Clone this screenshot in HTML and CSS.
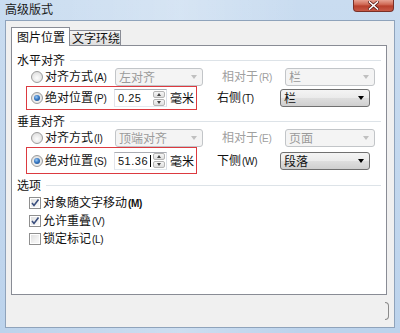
FILE: index.html
```html
<!DOCTYPE html>
<html lang="zh-CN">
<head>
<meta charset="utf-8">
<title>高级版式</title>
<link rel="stylesheet" href="styles.css">
</head>
<body>
<div class="window">
  <div class="titlebar">
    <span class="title">高级版式</span>
    <div class="close">
      <svg width="11" height="9" viewBox="0 0 11 9"><path d="M1.5 1 L9.5 8 M9.5 1 L1.5 8" stroke="#5a1a14" stroke-width="3" stroke-linecap="square"/><path d="M1.5 1 L9.5 8 M9.5 1 L1.5 8" stroke="#ffffff" stroke-width="1.6" stroke-linecap="square"/></svg>
    </div>
  </div>
  <div class="client">
    <div class="tabs">
      <div class="tab active">图片位置</div>
      <div class="tab">文字环绕</div>
    </div>
    <div class="panel">
      <div class="group-head g1"><span>水平对齐</span><i class="rule"></i></div>
      <div class="row">
        <div class="left">
          <span class="radio"></span><span class="label">对齐方式<span class="acc">(A)</span></span>
          <div class="select disabled wl"><span>左对齐</span><i class="arrow"></i></div>
        </div>
        <span class="rlabel dis">相对于<span class="acc">(R)</span></span>
        <div class="select disabled wr"><span>栏</span><i class="arrow"></i></div>
      </div>
      <div class="row boxed b1">
        <div class="left hilite">
          <span class="radio on"></span><span class="label">绝对位置<span class="acc">(P)</span></span>
          <div class="spin"><span class="val">0.25</span><span class="btns"><b class="up"></b><b class="dn"></b></span></div>
          <span class="unit">毫米</span>
        </div>
        <span class="rlabel">右侧<span class="acc">(T)</span></span>
        <div class="select wr"><span>栏</span><i class="arrow"></i></div>
      </div>

      <div class="group-head g2"><span>垂直对齐</span><i class="rule"></i></div>
      <div class="row">
        <div class="left">
          <span class="radio"></span><span class="label">对齐方式<span class="acc">(I)</span></span>
          <div class="select disabled wl"><span>顶端对齐</span><i class="arrow"></i></div>
        </div>
        <span class="rlabel dis">相对于<span class="acc">(E)</span></span>
        <div class="select disabled wr"><span>页面</span><i class="arrow"></i></div>
      </div>
      <div class="row boxed b2">
        <div class="left hilite">
          <span class="radio on"></span><span class="label">绝对位置<span class="acc">(S)</span></span>
          <div class="spin"><span class="val">51.36</span><i class="caret"></i><span class="btns"><b class="up"></b><b class="dn"></b></span></div>
          <span class="unit">毫米</span>
        </div>
        <span class="rlabel">下侧<span class="acc">(W)</span></span>
        <div class="select wr"><span>段落</span><i class="arrow"></i></div>
      </div>

      <div class="group-head g3"><span>选项</span><i class="rule"></i></div>
      <div class="check first"><span class="box"><svg width="10" height="10" viewBox="0 0 10 10"><path d="M2 5 L4 7.5 L8.5 1.5" fill="none" stroke="#3b4f7e" stroke-width="1.6"/></svg></span><span>对象随文字移动<span class="acc b">(M)</span></span></div>
      <div class="check"><span class="box"><svg width="10" height="10" viewBox="0 0 10 10"><path d="M2 5 L4 7.5 L8.5 1.5" fill="none" stroke="#3b4f7e" stroke-width="1.6"/></svg></span><span>允许重叠<span class="acc">(V)</span></span></div>
      <div class="check last"><span class="box"></span><span>锁定标记<span class="acc">(L)</span></span></div>
    </div>
    <div class="footer"><i class="grip"></i></div>
  </div>
</div>
</body>
</html>
```

FILE: styles.css
```css
* {
  box-sizing: border-box;
  margin: 0;
  padding: 0;
}

html, body {
  width: 400px;
  height: 333px;
  overflow: hidden;
}

body {
  font-family: "Noto Sans CJK SC", "Noto Sans", sans-serif;
  font-size: 12px;
  line-height: 14px;
  color: #111;
  background: #c4d8ee;
}

.window {
  width: 400px;
  height: 333px;
  display: flex;
  flex-direction: column;
  padding: 0 5px 5px 5px;
  background:
    linear-gradient(90deg, rgba(255,255,255,0) 0%, rgba(255,255,255,0.25) 45%, rgba(255,255,255,0) 75%),
    linear-gradient(180deg, #c9dcf0 0%, #bcd3ec 100%);
}

.titlebar {
  height: 20px;
  display: flex;
  align-items: flex-start;
}

.title {
  margin-top: 3px;
  font-size: 12px;
  line-height: 12px;
  color: #1a1a1a;
}

.close {
  margin-left: auto;
  margin-right: 1px;
  width: 41px;
  height: 12px;
  border: 1px solid #7a3028;
  border-top: none;
  border-radius: 0 0 4px 4px;
  background: linear-gradient(180deg, #e7a292 0%, #d06a56 40%, #b8402c 55%, #c75a47 100%);
  display: flex;
  align-items: center;
  justify-content: center;
}

.client {
  flex: 1;
  background: #f0f0f0;
  border: 1px solid #8fa3bb;
  padding: 6px 7px 0 5px;
  display: flex;
  flex-direction: column;
}

.tabs {
  height: 18px;
  display: flex;
  align-items: flex-end;
  position: relative;
  z-index: 1;
}

.tab {
  height: 15px;
  width: 51px;
  padding-left: 2px;
  border: 1px solid #898c95;
  border-left: none;
  border-bottom: none;
  background: linear-gradient(180deg, #f3f3f3 0%, #ebebeb 50%, #dedede 100%);
  display: flex;
  align-items: center;
  line-height: 12px;
  white-space: nowrap;
  overflow: hidden;
}

.tab.active {
  height: 19px;
  width: 59px;
  margin-bottom: -1px;
  padding-left: 5px;
  padding-bottom: 1px;
  border-left: 1px solid #898c95;
  background: #fff;
}

.panel {
  height: 250px;
  background: #fff;
  border: 1px solid #898c95;
  padding: 7px 5px 0 5px;
  display: flex;
  flex-direction: column;
}

.group-head {
  height: 14px;
  display: flex;
  align-items: center;
}

.group-head .rule {
  flex: 1;
  height: 1px;
  margin-left: 5px;
  background: #dde3e8;
}

.g2 { margin-top: 4px; }
.g3 { margin-top: 4px; }

.row {
  height: 19px;
  display: flex;
  align-items: center;
  padding-left: 14px;
}

.row.boxed { height: 24px; }
.row.b2 { height: 27px; }

.left {
  width: 191px;
  height: 100%;
  display: flex;
  align-items: center;
}

.left.hilite {
  width: 171px;
  margin-left: -5px;
  margin-right: 20px;
  padding-left: 4px;
  border: 1px solid #dc3a40;
}

.radio {
  width: 12px;
  height: 12px;
  flex: none;
  border-radius: 50%;
  border: 1px solid #9c9c9c;
  background: radial-gradient(circle at 50% 60%, #fdfdfd 0%, #e6e6e6 60%, #d4d4d4 100%);
  display: flex;
  align-items: center;
  justify-content: center;
}

.radio.on::after {
  content: "";
  width: 6px;
  height: 6px;
  border-radius: 50%;
  background: radial-gradient(circle at 40% 35%, #9ccaf4 0%, #3a7ac4 45%, #16427e 100%);
}

.label {
  width: 72px;
  padding-left: 2px;
  flex: none;
}

.hilite .label { width: 71px; }

.acc {
  font-family: "Liberation Sans", "DejaVu Sans", sans-serif;
  font-size: 10px;
  letter-spacing: -0.3px;
  margin-left: 1px;
}

.acc.b { font-weight: bold; }

.select {
  height: 18px;
  display: flex;
  align-items: center;
  padding-left: 3px;
  border: 1px solid #707070;
  border-radius: 3px;
  background: linear-gradient(180deg, #f4f4f4 0%, #ebebeb 48%, #dedede 52%, #cfcfcf 100%);
  flex: none;
}

.select span { flex: 1; }

.select .arrow {
  width: 0;
  height: 0;
  margin-right: 5px;
  border-left: 3.5px solid transparent;
  border-right: 3.5px solid transparent;
  border-top: 4px solid #000;
}

.select.disabled {
  border-color: #c2c5c8;
  background: #f4f4f4;
  color: #9a9a9a;
}

.select.disabled .arrow { border-top-color: #c0c0c0; }

.wl { width: 88px; }
.wr { width: 90px; }

.rlabel {
  width: 63px;
  flex: none;
}

.rlabel.dis { color: #a0a0a0; }

.spin {
  width: 53px;
  height: 18px;
  flex: none;
  display: flex;
  align-items: center;
  padding: 0 1px 0 3px;
  border: 1px solid #abadb3;
  border-color: #abadb3 #dbdfe6 #e3e9ef #e2e3ea;
  background: #fff;
  font-family: "Liberation Sans", "DejaVu Sans", sans-serif;
  font-size: 11px;
  letter-spacing: 0.5px;
}

.spin .val { flex: none; }

.spin .caret {
  width: 1px;
  height: 12px;
  margin-left: 2px;
  background: #000;
}

.spin .btns {
  margin-left: auto;
  width: 12px;
  height: 15px;
  display: flex;
  flex-direction: column;
  gap: 1px;
}

.spin .btns b {
  flex: 1;
  border: 1px solid #b4b4b4;
  border-radius: 2px;
  background: linear-gradient(180deg, #f6f6f6, #dedede);
  display: flex;
  align-items: center;
  justify-content: center;
}

.spin .btns b.up::after {
  content: "";
  border-left: 2.5px solid transparent;
  border-right: 2.5px solid transparent;
  border-bottom: 3px solid #444;
}

.spin .btns b.dn::after {
  content: "";
  border-left: 2.5px solid transparent;
  border-right: 2.5px solid transparent;
  border-top: 3px solid #444;
}

.unit {
  margin-left: 3px;
  flex: none;
}

.check {
  height: 18px;
  display: flex;
  align-items: center;
  padding-left: 12px;
}

.check.first { margin-top: 2px; }
.check.last { height: 17px; }

.check .box {
  width: 12px;
  height: 12px;
  flex: none;
  margin-right: 2px;
  border: 1px solid #8f8f8f;
  background: linear-gradient(135deg, #dcdcdc 0%, #f2f2f2 60%, #fafafa 100%);
  box-shadow: inset 0 0 0 1px #fff;
  display: flex;
  align-items: center;
  justify-content: center;
}

.footer {
  flex: 1;
  display: flex;
  justify-content: flex-end;
  padding-top: 7px;
}

.grip {
  width: 4px;
  height: 18px;
  margin-right: -2px;
  border: 1px solid #8a8a8a;
  border-left: none;
  border-radius: 0 4px 4px 0;
}
```
